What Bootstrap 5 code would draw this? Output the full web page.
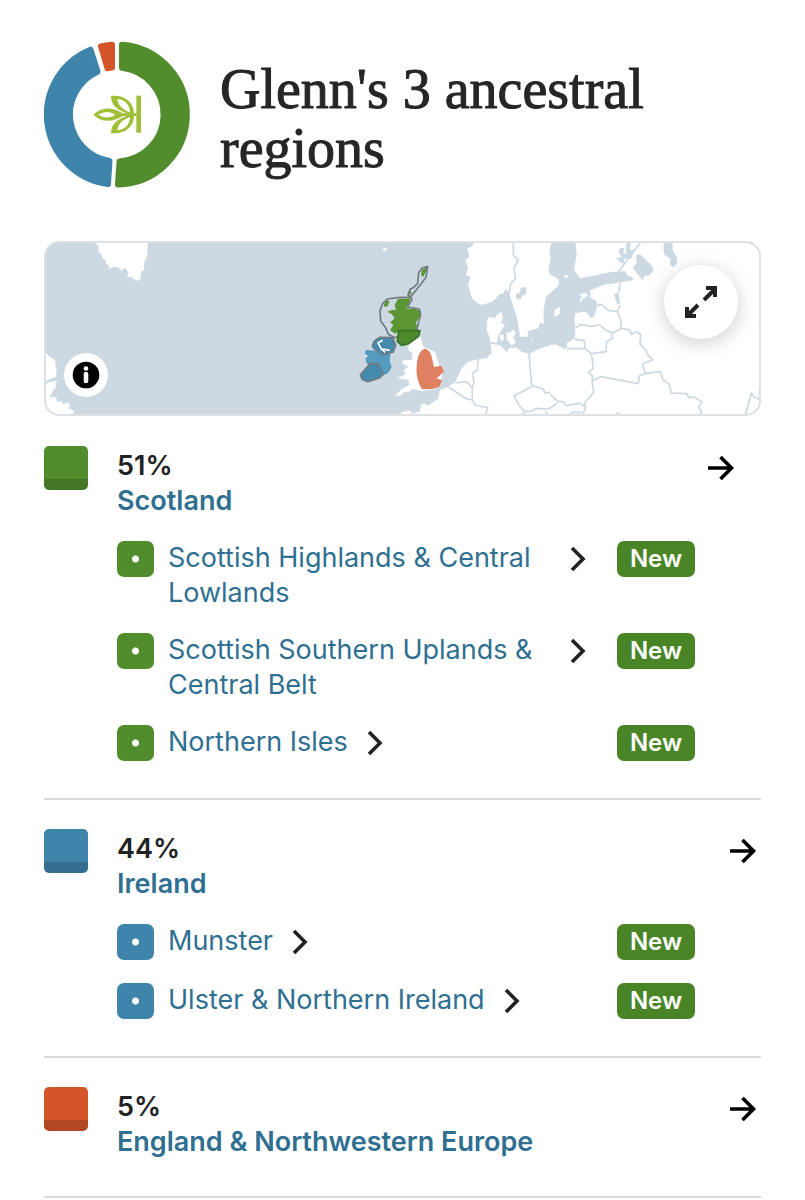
<!DOCTYPE html>
<html lang="en">
<head>
<meta charset="utf-8">
<meta name="viewport" content="width=device-width, initial-scale=1">
<title>Ancestral regions</title>
<link href="https://cdn.jsdelivr.net/npm/bootstrap@5.3.0/dist/css/bootstrap.min.css" rel="stylesheet">
<style>
:root{--green:#518d2d;--blue:#3f84ab;--orange:#d5552b;--linkc:#2f6f91}
body{font-family:Inter,"Liberation Sans",sans-serif;font-size:27px;line-height:35px;color:#222;background:#fff}
a{color:var(--linkc);text-decoration:none}
.page{padding:41px 44px 0}
.donut{width:147px;height:147px}
.title{font-family:"Liberation Serif",serif;font-size:56px;line-height:59px;font-weight:400;-webkit-text-stroke:1px #262626;color:#262626;padding-top:19px;margin:0}
.head{gap:29px;margin-bottom:53px}
.map{height:175px;border:2px solid #dfe2e5;border-radius:15px;background:#ccd9e2;overflow:hidden;margin-bottom:1px}
.round{position:absolute;border:0;border-radius:50%;background:#fff;padding:0;display:flex;align-items:center;justify-content:center}
.info{left:18px;bottom:17px;width:44px;height:44px}
.expand{right:21px;top:22px;width:74px;height:74px;box-shadow:0 4px 20px rgba(0,0,0,.2)}
.region{gap:29px;padding:29px 0 37px;border-bottom:2px solid #d8d8d8}
.swatch{width:44px;height:44px;border-radius:5px;background:linear-gradient(rgba(0,0,0,0) 33px,rgba(0,0,0,.16) 33px) var(--tone)}
.main{padding-top:2px;min-width:0}
.pct{font-weight:600;color:#222}
.rname{font-weight:600}
.go{color:#000;padding:6px 4px 0 0}
.go.inset{padding-right:26px}
.go svg,.chev{display:block}
.subs{gap:22px;margin:22px 66px 0 0}
.sub{gap:14px}
.dot{width:37px;height:36px;margin-top:1px;border-radius:7px;background:radial-gradient(circle,#fff 3px,rgba(255,255,255,0) 4px) var(--tone)}
.sublink{gap:18px;padding-right:16px;min-width:0}
.chev{margin-top:6px;color:#222}
.new{font-size:24px;line-height:36px;height:36px;width:78px;margin-top:1px;font-weight:600;padding:0;border-radius:7px;background:#498526}
.green{--tone:var(--green)}.blue{--tone:var(--blue)}.orange{--tone:var(--orange)}
</style>
</head>
<body>
<svg class="d-none" xmlns="http://www.w3.org/2000/svg">
<symbol id="arrow" viewBox="0 0 28 28"><path d="M1 14H25M13.500 3L24.500 14L13.500 25" fill="none" stroke="currentColor" stroke-width="3.600"/></symbol>
<symbol id="chev" viewBox="0 0 18 26"><path d="M3 2L14 13L3 24" fill="none" stroke="currentColor" stroke-width="3.600"/></symbol>
</svg>
<div class="container-fluid page">
<header class="head d-flex align-items-start">
<svg class="donut flex-shrink-0" viewBox="0 0 147 147" role="img" aria-label="Region shares">
<g stroke-width="6" stroke-linejoin="round">
<path fill="#518d2d" stroke="#518d2d" d="M78 3.700A70 70 0 0 1 74 143.500L75.500 120.400A47 47 0 0 0 78 26.800Z"/>
<path fill="#3f84ab" stroke="#3f84ab" d="M64 143A70 70 0 0 1 46.500 8.700L53.500 30.700A47 47 0 0 0 65.500 119.900Z"/>
<path fill="#d5552b" stroke="#d5552b" d="M57 5.400A70 70 0 0 1 68 3.700V26.600A47 47 0 0 0 63.500 27.300Z"/>
</g>
<g transform="translate(-14 -11) scale(.33333)" fill="#a0bf39">
<path d="M319 197H333V308H319Z"/>
<path fill-rule="evenodd" d="M190 254C214 230 248 230 278 250H320V258H278C248 278 214 278 190 254ZM205 254C222 265 240 265 256 254C240 243 222 243 205 254Z"/>
<path fill-rule="evenodd" d="M243 198C285 194 312 217 312 252L302 254C268 244 243 230 243 198ZM262 207C265 227 277 238 300 247C300 225 285 209 262 207Z"/>
<path fill-rule="evenodd" d="M243 310C285 314 312 291 312 256L302 254C268 264 243 278 243 310ZM262 301C265 281 277 270 300 261C300 283 285 299 262 301Z"/>
</g>
</svg>
<h1 class="title">Glenn's 3 ancestral regions</h1>
</header>
<section class="map position-relative" aria-label="Map of regions">
<svg class="d-block w-100 h-100" viewBox="46 243 713 171" preserveAspectRatio="xMidYMid slice">
<g transform="translate(40 235) scale(.33333)" fill="#fff">
<path d="M160 20L175 32L176 50L185 58L187 70L198 76L197 86L208 92L206 102L222 95L236 98L245 108L254 98L266 112L261 125L275 127L288 138L302 133L303 112L312 105L313 80L322 62L323 20Z"/>
<path d="M15 352L30 366L46 374L46 392L50 400L48 425L36 430L15 440ZM15 450L30 440L54 438L46 446L48 456L40 464L28 492L40 484L50 490L50 500L62 498L70 508L84 502L90 512L84 520L100 526L104 532L90 538L88 550H15Z"/>
</g>
<g transform="translate(340 235) scale(.33333)">
<g fill="#fff">
<path d="M130 39L138 38L140 45L134 48L129 45Z"/>
<path d="M400 20V30L382 42L388 65L376 75L384 100L378 122L392 125L384 150L396 190L410 203L428 210L460 198L478 178L490 175L497 162L508 172L512 190L520 215L530 245L535 275L540 305L562 305L565 288L595 280L600 262L612 268L610 230L618 185L640 166L656 150L655 132L630 118L625 105L632 70L628 50L635 20Z"/>
<path d="M470 240L485 230L489 250L482 262L494 270L485 285L475 300L470 325L452 324L448 305L440 285L442 255L446 245L465 250ZM500 290L508 295L520 283L528 295L520 306L527 322L515 332L500 312ZM478 300L490 298L492 315L482 318Z"/>
<path d="M642 240L644 225L660 215V235L646 246ZM572 316L578 314L577 320Z"/>
<path d="M452 322L475 328L490 340L500 352L508 338L530 338L545 350L570 356L600 340L645 328L670 340V550H180L184 532L210 526L214 535L240 530L243 510L252 505L262 512L275 505L295 490L300 465L324 456L346 440L365 400L385 380L415 372L440 370L455 355Z"/>
<path d="M205 330L238 295L250 335L285 350L300 400L308 410L300 455L285 462L245 468L218 462L205 472L195 470L180 482L164 482L188 460L208 450L205 434L185 432L172 430L196 418L192 404L205 395L186 385L188 376L215 375L218 355L205 345Z"/>
</g>
<path fill="#ccd9e2" d="M528 178L540 172L542 158L560 157L558 176L545 185L540 195L528 190Z"/>
<g fill="none" stroke="#ccd9e2" stroke-width="5" stroke-linejoin="round">
<path d="M520 20V60L535 75L522 100L527 130L512 145L508 172M415 372L412 405L397 415L402 440L397 460V495L376 490L352 474L325 456M346 444L380 440L397 460M397 495L404 510L442 518L436 548M567 355L575 452L610 462L614 474L630 473L657 500L625 522L590 520L572 530L552 528L536 510L522 482L575 455M540 550L545 538L560 528M615 528L630 548M475 328L452 323"/>
</g>
<g stroke="#707a80" stroke-width="5" fill="none" stroke-linejoin="round">
<path stroke="none" fill="#5b9633" d="M174 192L212 190L206 208L198 220L225 222L242 228L238 250L228 262L234 285L174 290L166 296L150 286L160 270L150 262L164 250L156 238L142 230L158 224L168 226L164 210ZM132 208L140 194L149 200L142 214L133 216ZM243 120L246 104L262 96L256 114L249 126ZM206 178L212 166L216 178Z"/>
<path d="M263 95L246 99L236 113L233 145L220 158L210 163L204 180L212 186L240 151L258 127ZM212 186L172 188L142 192L128 206L120 226L122 258L138 280L145 298L165 308L176 304M212 186L216 194L202 216L238 222L242 238L230 286"/>
<path fill="#4c8a2b" stroke="#39702a" d="M176 287L240 287L236 304L206 326L185 331L172 320Z"/>
<path fill="#549bc0" stroke="none" d="M78 345L110 347L152 352L149 378L155 396L145 414L120 425L85 410L92 392L80 385L76 370L85 364L74 355Z"/>
<path fill="#438aae" d="M104 317L118 307L158 308L167 331L160 351L128 359L101 340L97 331Z"/>
<path fill="#438aae" d="M90 386L115 386L130 416L120 428L84 440L67 434L61 420Z"/>
<path stroke="#fff" d="M128 316L114 324L124 342L136 352M129 342L149 346"/>
</g>
<path fill="#df8060" d="M230 390Q235 345 255 341Q272 345 276 370L282 396L304 392L312 410L290 430L306 436L298 456L276 462L246 463Q226 430 230 390Z"/>
</g>
<g transform="translate(550 235) scale(.33333)">
<path fill="#fff" d="M75 10H670V560H0V328L25 340L38 346L52 335L50 325L75 310V275L73 250L76 235L98 230L110 232L122 248L132 245L140 220V197L122 190L120 165L165 148L200 145L205 110L95 135L72 105L80 60Z"/>
<path fill="#fff" d="M88 178L104 173L116 180L96 194L92 202L88 196L96 186ZM42 124L48 119L56 124L48 130Z"/>
<g fill="#ccd9e2">
<path d="M90 130L130 122L180 112L225 108L232 122L250 128L248 136L200 143L165 148L120 165L104 168L92 156ZM192 178L206 172L210 208L200 205ZM258 60L270 58L304 90L312 105L298 122L284 122L278 136L258 112L248 96L260 85ZM344 20H368V45L382 70L380 88L368 97L360 88L362 72L342 58L340 38ZM210 40L222 38L220 56L228 56L230 24L240 24V45L250 44L246 70L220 72L226 86L210 82L198 70L216 66L206 52Z"/>
</g>
<g fill="none" stroke="#ccd9e2" stroke-width="5" stroke-linejoin="round">
<path d="M272 22L205 110M210 143L207 172M210 210L202 230L212 255L214 280L190 294L168 286L150 270L120 274L92 268L75 280M202 230L175 226L154 208L140 212M75 313L102 317L106 340L124 356L168 350L170 320L188 310L184 294M50 341H106M214 280L240 285L244 298L262 290L272 300L270 328L290 348V356L308 374L278 388L286 415L268 422L265 446L152 425L126 438M124 356L130 400L116 412L128 424L126 438L131 472L104 505L106 518L96 548M286 415L330 410L340 435L358 448L364 474L410 476L416 488L430 486L456 500L446 518L455 530L446 548M0 478L24 500L40 500L48 512L88 505L106 515M0 520L22 504M50 545L66 532L96 532M190 545L204 534L216 544M584 548L604 474L612 486L630 494M628 462V480"/>
</g>
</g>
</svg>
<button type="button" class="round info" aria-label="Map information"><svg width="28" height="28" viewBox="0 0 28 28"><circle cx="14" cy="14" r="13.300"/><circle cx="14" cy="7.500" r="2.300" fill="#fff"/><path d="M14 13V20" stroke="#fff" stroke-width="4.600" stroke-linecap="round"/></svg></button>
<button type="button" class="round expand" aria-label="Expand map"><svg width="34" height="34" viewBox="0 0 34 34" fill="none" stroke="#222" stroke-width="4"><path d="M20 15L31 4M22 3H31V12M14 20L3 31M3 22V31H12"/></svg></button>
</section>
<main>
<section class="region green d-flex align-items-start">
<div class="swatch flex-shrink-0"></div>
<div class="main flex-grow-1">
<div class="d-flex justify-content-between"><div><div class="pct">51%</div><a class="rname" href="#scotland">Scotland</a></div><a class="go inset" href="#scotland" aria-label="Open Scotland"><svg width="28" height="28"><use href="#arrow"/></svg></a></div>
<ul class="subs list-unstyled d-flex flex-column">
<li class="sub d-flex align-items-start"><span class="dot flex-shrink-0"></span><a class="sublink d-flex align-items-start" href="#highlands"><span>Scottish Highlands &amp; Central Lowlands</span><svg class="chev flex-shrink-0" width="18" height="26"><use href="#chev"/></svg></a><span class="badge new ms-auto flex-shrink-0">New</span></li>
<li class="sub d-flex align-items-start"><span class="dot flex-shrink-0"></span><a class="sublink d-flex align-items-start" href="#uplands"><span>Scottish Southern Uplands &amp; Central Belt</span><svg class="chev flex-shrink-0" width="18" height="26"><use href="#chev"/></svg></a><span class="badge new ms-auto flex-shrink-0">New</span></li>
<li class="sub d-flex align-items-start"><span class="dot flex-shrink-0"></span><a class="sublink d-flex align-items-start" href="#isles"><span>Northern Isles</span><svg class="chev flex-shrink-0" width="18" height="26"><use href="#chev"/></svg></a><span class="badge new ms-auto flex-shrink-0">New</span></li>
</ul>
</div>
</section>
<section class="region blue d-flex align-items-start">
<div class="swatch flex-shrink-0"></div>
<div class="main flex-grow-1">
<div class="d-flex justify-content-between"><div><div class="pct">44%</div><a class="rname" href="#ireland">Ireland</a></div><a class="go" href="#ireland" aria-label="Open Ireland"><svg width="28" height="28"><use href="#arrow"/></svg></a></div>
<ul class="subs list-unstyled d-flex flex-column">
<li class="sub d-flex align-items-start"><span class="dot flex-shrink-0"></span><a class="sublink d-flex align-items-start" href="#munster"><span>Munster</span><svg class="chev flex-shrink-0" width="18" height="26"><use href="#chev"/></svg></a><span class="badge new ms-auto flex-shrink-0">New</span></li>
<li class="sub d-flex align-items-start"><span class="dot flex-shrink-0"></span><a class="sublink d-flex align-items-start" href="#ulster"><span>Ulster &amp; Northern Ireland</span><svg class="chev flex-shrink-0" width="18" height="26"><use href="#chev"/></svg></a><span class="badge new ms-auto flex-shrink-0">New</span></li>
</ul>
</div>
</section>
<section class="region orange d-flex align-items-start">
<div class="swatch flex-shrink-0"></div>
<div class="main flex-grow-1">
<div class="d-flex justify-content-between"><div><div class="pct">5%</div><a class="rname" href="#england">England &amp; Northwestern Europe</a></div><a class="go" href="#england" aria-label="Open England and Northwestern Europe"><svg width="28" height="28"><use href="#arrow"/></svg></a></div>
</div>
</section>
</main>
</div>
<script src="https://cdn.jsdelivr.net/npm/bootstrap@5.3.0/dist/js/bootstrap.bundle.min.js"></script>
</body>
</html>
